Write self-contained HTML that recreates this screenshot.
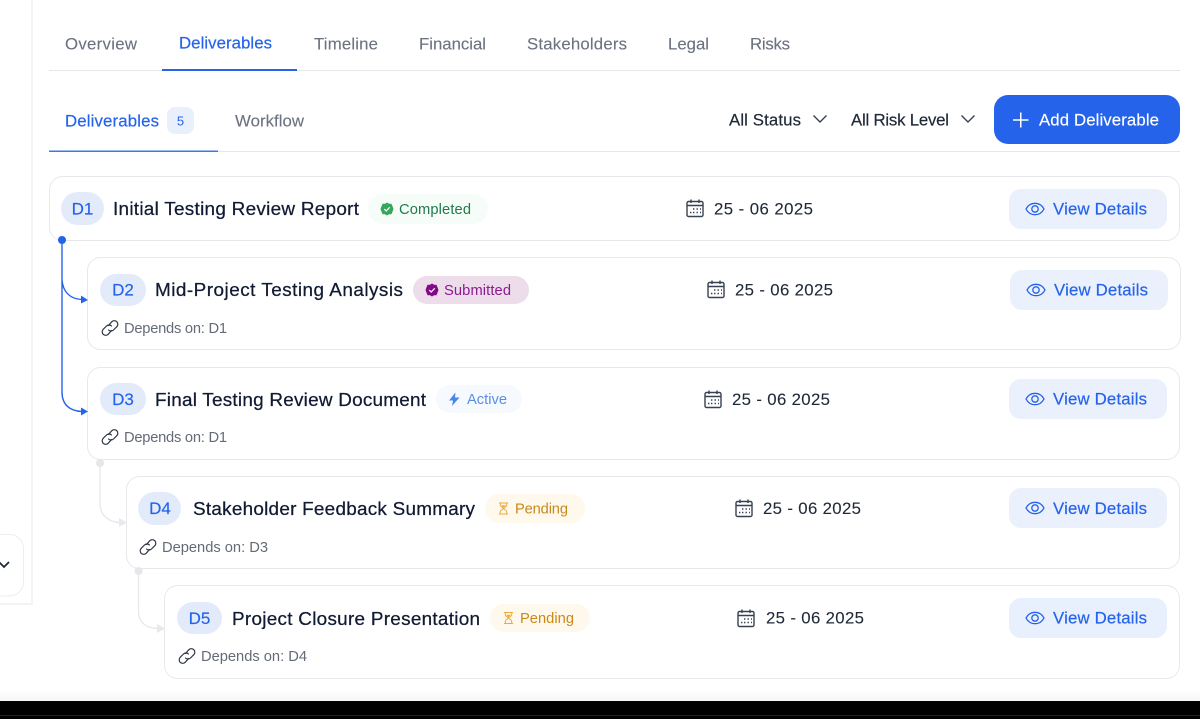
<!DOCTYPE html>
<html lang="en">
<head>
<meta charset="utf-8">
<title>Deliverables</title>
<style>
html,body{margin:0;padding:0;background:#fff;width:1200px;height:719px;overflow:hidden}
svg{display:block}
text{font-family:"Liberation Sans",sans-serif}
.tab{font-size:16.8px;fill:#6b7280;stroke:#6b7280;stroke-width:.12}
.blue{fill:#2563eb;stroke:#2563eb;stroke-width:.2}
.ttl{font-size:18.9px;fill:#111a33;stroke:#111a33;stroke-width:.25}
.pill{font-size:17px;fill:#2563eb;text-anchor:middle;stroke:#2563eb;stroke-width:.15}
.date{font-size:16.8px;fill:#1f2937;stroke:#1f2937;stroke-width:.1}
.view{font-size:16.8px;fill:#2563eb;stroke:#2563eb;stroke-width:.2}
.dep{font-size:14.7px;fill:#646b78}
.bd{font-size:14.7px}
.flt{font-size:16.8px;fill:#1f2937;stroke:#1f2937;stroke-width:.2}
.card{fill:#fff;stroke:#e7e8ec;stroke-width:1}
</style>
</head>
<body>
<svg width="1200" height="719" viewBox="0 0 1200 719" xmlns="http://www.w3.org/2000/svg">
<defs>
<linearGradient id="fade" x1="0" y1="0" x2="0" y2="1"><stop offset="0" stop-color="#fff"/><stop offset="1" stop-color="#f6f6f6"/></linearGradient>
<symbol id="eye" viewBox="0 0 20 20" overflow="visible"><path d="M1 10C3 6.200 6.200 4.300 10 4.300S17 6.200 19 10C17 13.800 13.800 15.700 10 15.700S3 13.800 1 10Z" fill="none" stroke="#2563eb" stroke-width="1.300"/><circle cx="10" cy="10" r="3.200" fill="none" stroke="#2563eb" stroke-width="1.300"/></symbol>
<symbol id="cal" viewBox="0 0 18 18" overflow="visible"><rect x="1" y="2.500" width="16" height="15" rx="1.500" fill="none" stroke="#374151" stroke-width="1.400"/><path d="M1 6.500H17M5 .5V4M13 .5V4" fill="none" stroke="#374151" stroke-width="1.400"/><path d="M7 10h1.400M10.500 10h1.400M14 10h1M4 13.500h1.400M7 13.500h1.400M10.500 13.500h1.400M14 13.500h1" stroke="#374151" stroke-width="1.400" fill="none"/></symbol>
<symbol id="lnk" viewBox="0 0 18 18" overflow="visible"><path d="M7.500 6.500 10.800 2.700a3.600 3.600 0 0 1 5 0a3.600 3.600 0 0 1 0 5L12.500 11a3.600 3.600 0 0 1-5 0" fill="none" stroke="#2f3644" stroke-width="1.200" stroke-linecap="round"/><path d="M10.500 7a3.600 3.600 0 0 0-5 0L2.200 10.300a3.600 3.600 0 0 0 0 5a3.600 3.600 0 0 0 5 0L10.500 11.500" fill="none" stroke="#2f3644" stroke-width="1.200" stroke-linecap="round"/></symbol>
<symbol id="shield" viewBox="0 0 14 14" overflow="visible"><path d="M7 .5 9 1.700 11.400 1.800 12.400 4 13.500 7 12.400 10 11.400 12.200 9 12.300 7 13.500 5 12.300 2.600 12.200 1.600 10 .5 7 1.600 4 2.600 1.800 5 1.700Z" fill="currentColor"/><path d="M4.300 7.100 6.200 9 9.700 5.300" fill="none" stroke="#fff" stroke-width="1.200"/></symbol>
<symbol id="hour" viewBox="0 0 12 14" overflow="visible"><path d="M1 1H11M1 13H11M2.500 1V3.500C2.500 5 5.300 6 6 7 6.700 8 9.500 9 9.500 10.500V13M9.500 1V3.500C9.500 5 6.700 6 6 7 5.300 8 2.500 9 2.500 10.500V13" fill="none" stroke="#f0a93c" stroke-width="1.100"/><path d="M3.500 3.500H8.500L6 6.300Z" fill="#f0a93c"/></symbol>
</defs>

<rect width="1200" height="719" fill="#fff"/>

<!-- Sidebar remnant -->
<path d="M32 0V604H0" fill="none" stroke="#f3f4f6" stroke-width="2"/>
<path d="M0 534.500H9.500A14 14 0 0 1 23.500 548.500V582A14 14 0 0 1 9.500 596H0" fill="#fff" stroke="#eceded"/>
<path d="M-1 562 4 567 9 562" fill="none" stroke="#1f2937" stroke-width="1.800"/>

<!-- Main tabs -->
<text class="tab" x="65" y="49.500" textLength="72">Overview</text>
<text class="tab blue" x="179" y="48.500" textLength="93">Deliverables</text>
<text class="tab" x="314" y="49.500" textLength="64">Timeline</text>
<text class="tab" x="419" y="49.500" textLength="67">Financial</text>
<text class="tab" x="527" y="49.500" textLength="100">Stakeholders</text>
<text class="tab" x="668" y="49.500" textLength="41">Legal</text>
<text class="tab" x="750" y="49.500" textLength="40">Risks</text>
<rect x="49" y="70" width="1131" height="1" fill="#e5e7eb"/>
<rect x="162" y="69" width="135" height="2" fill="#2563eb"/>

<!-- Sub tabs -->
<text class="tab blue" x="65" y="126.500" textLength="94">Deliverables</text>
<rect x="167" y="107" width="27" height="27" rx="8" fill="#e9effb"/>
<text x="180.500" y="125.500" font-size="13" fill="#2563eb" text-anchor="middle">5</text>
<text class="tab" x="235" y="126.500" textLength="69">Workflow</text>
<rect x="49" y="151" width="1131" height="1" fill="#e5e7eb"/>
<rect x="49" y="150.500" width="169" height="1.500" fill="#3b78e7"/>

<!-- Filters -->
<text class="flt" x="729" y="125.500" textLength="72">All Status</text>
<path d="M813.500 115.500 820 122 826.500 115.500" fill="none" stroke="#374151" stroke-width="1.400"/>
<text class="flt" x="851" y="125.500" textLength="98">All Risk Level</text>
<path d="M961.500 115.500 968 122 974.500 115.500" fill="none" stroke="#374151" stroke-width="1.400"/>
<rect x="994" y="95" width="186" height="49" rx="14" fill="#2563eb"/>
<path d="M1013 120H1028.500M1020.750 112.500V127.500" stroke="#fff" stroke-width="1.500" fill="none"/>
<text x="1039" y="125.500" font-size="16.800" fill="#fff" stroke="#fff" stroke-width=".15" textLength="120">Add Deliverable</text>

<!-- D1 -->
<rect class="card" x="49.500" y="176.500" width="1130" height="64" rx="13"/>
<rect x="61" y="192" width="43" height="33" rx="16.500" fill="#e3ebfb"/>
<text class="pill" x="82.500" y="214.500">D1</text>
<text class="ttl" x="113" y="215" textLength="246">Initial Testing Review Report</text>
<rect x="368" y="194" width="120" height="30" rx="15" fill="#f6fdf8"/>
<use href="#shield" x="380" y="202" width="14" height="14" color="#34a85a"/>
<text class="bd" x="399" y="214" fill="#1f7a4d" textLength="72">Completed</text>
<use href="#cal" x="686" y="199" width="18" height="18"/>
<text class="date" x="714" y="214.500" textLength="99">25 - 06 2025</text>
<rect x="1009" y="189" width="158" height="40" rx="12" fill="#eaf0fc"/>
<use href="#eye" x="1025" y="199" width="20" height="20"/>
<text class="view" x="1053" y="214.500" textLength="94">View Details</text>

<!-- D2 -->
<rect class="card" x="87.500" y="257.500" width="1093" height="92" rx="13"/>
<rect x="100" y="274" width="46" height="32" rx="16" fill="#e3ebfb"/>
<text class="pill" x="123" y="295.500">D2</text>
<text class="ttl" x="155" y="296" textLength="248">Mid-Project Testing Analysis</text>
<rect x="413" y="276" width="116" height="28" rx="14" fill="#eddcea"/>
<use href="#shield" x="425" y="283" width="14" height="14" color="#86088a"/>
<text class="bd" x="444" y="295" fill="#8d1a91" textLength="67">Submitted</text>
<use href="#cal" x="707" y="280" width="18" height="18"/>
<text class="date" x="735" y="295.500" textLength="98">25 - 06 2025</text>
<rect x="1010" y="270" width="158" height="40" rx="12" fill="#eaf0fc"/>
<use href="#eye" x="1026" y="280" width="20" height="20"/>
<text class="view" x="1054" y="295.500" textLength="94">View Details</text>
<use href="#lnk" x="101" y="319" width="18" height="18"/>
<text class="dep" x="124" y="333" textLength="103">Depends on: D1</text>

<!-- D3 -->
<rect class="card" x="87.500" y="367.500" width="1092" height="92" rx="13"/>
<rect x="100" y="383" width="46" height="32" rx="16" fill="#e3ebfb"/>
<text class="pill" x="123" y="405">D3</text>
<text class="ttl" x="155" y="406" textLength="271">Final Testing Review Document</text>
<rect x="436" y="385" width="86" height="28" rx="14" fill="#f6fafe"/>
<path d="M455.500 392.500 449 400.500H453L452 406 459.500 397.500H455Z" fill="#4a86e8"/>
<text class="bd" x="467" y="404" fill="#5b8fdf" textLength="40">Active</text>
<use href="#cal" x="704" y="390" width="18" height="18"/>
<text class="date" x="732" y="405" textLength="98">25 - 06 2025</text>
<rect x="1009" y="379" width="158" height="40" rx="12" fill="#eaf0fc"/>
<use href="#eye" x="1025" y="389" width="20" height="20"/>
<text class="view" x="1053" y="404.500" textLength="94">View Details</text>
<use href="#lnk" x="101" y="428" width="18" height="18"/>
<text class="dep" x="124" y="442" textLength="103">Depends on: D1</text>

<!-- D4 -->
<rect class="card" x="126.500" y="476.500" width="1053" height="92" rx="13"/>
<rect x="138" y="492" width="43" height="33" rx="16.500" fill="#e3ebfb"/>
<text class="pill" x="160" y="514">D4</text>
<text class="ttl" x="193" y="515" textLength="282">Stakeholder Feedback Summary</text>
<rect x="485" y="494" width="100" height="29" rx="14.500" fill="#fff8ec"/>
<use href="#hour" x="498" y="502" width="11" height="13"/>
<text class="bd" x="515" y="513.500" fill="#c98a1a" textLength="53">Pending</text>
<use href="#cal" x="735" y="499" width="18" height="18"/>
<text class="date" x="763" y="514" textLength="98">25 - 06 2025</text>
<rect x="1009" y="488" width="158" height="40" rx="12" fill="#eaf0fc"/>
<use href="#eye" x="1025" y="498" width="20" height="20"/>
<text class="view" x="1053" y="514" textLength="94">View Details</text>
<use href="#lnk" x="139" y="538" width="18" height="18"/>
<text class="dep" x="162" y="552" textLength="106">Depends on: D3</text>

<!-- D5 -->
<rect class="card" x="164.500" y="585.500" width="1015" height="93" rx="13"/>
<rect x="177" y="602" width="45" height="32" rx="16" fill="#e3ebfb"/>
<text class="pill" x="199.500" y="624">D5</text>
<text class="ttl" x="232" y="625" textLength="248">Project Closure Presentation</text>
<rect x="490" y="604" width="100" height="28" rx="14" fill="#fff8ec"/>
<use href="#hour" x="503" y="611.500" width="11" height="13"/>
<text class="bd" x="520" y="623" fill="#c98a1a" textLength="54">Pending</text>
<use href="#cal" x="737" y="609" width="18" height="18"/>
<text class="date" x="766" y="623.500" textLength="98">25 - 06 2025</text>
<rect x="1009" y="598" width="158" height="40" rx="12" fill="#e8effd"/>
<use href="#eye" x="1025" y="608" width="20" height="20"/>
<text class="view" x="1053" y="623.500" textLength="94">View Details</text>
<use href="#lnk" x="178" y="647" width="18" height="18"/>
<text class="dep" x="201" y="661" textLength="106">Depends on: D4</text>

<!-- Blue connectors (above cards) -->
<path d="M62 240V392C62 405 70 411 82 411.500M62 280C63 292 70 299 82 299.500" fill="none" stroke="#2563eb" stroke-width="1.400"/>
<circle cx="62" cy="240" r="4" fill="#2563eb"/>
<path d="M81 295.500 88 300 81 303.500ZM81 407.500 88 411.500 81 415.500Z" fill="#2563eb"/>

<!-- Grey connectors (above cards) -->
<path d="M100 463V503C100 515 108 522 120 522.500M138.500 571V612C138.500 622 146 628.500 158 628.500" fill="none" stroke="#e8e9ec" stroke-width="1.400"/>
<circle cx="100" cy="463" r="4" fill="#e5e7eb"/>
<circle cx="138.500" cy="571" r="4" fill="#e5e7eb"/>
<path d="M119 518 127 522.500 119 527ZM157 624 165 628.500 157 633Z" fill="#e8e9ec"/>

<!-- Bottom -->
<rect x="0" y="690" width="1200" height="11" fill="url(#fade)"/>
<rect x="0" y="701" width="1200" height="18" fill="#000"/>
<rect x="0" y="715" width="1200" height="1" fill="#222"/>
</svg>
</body>
</html>
